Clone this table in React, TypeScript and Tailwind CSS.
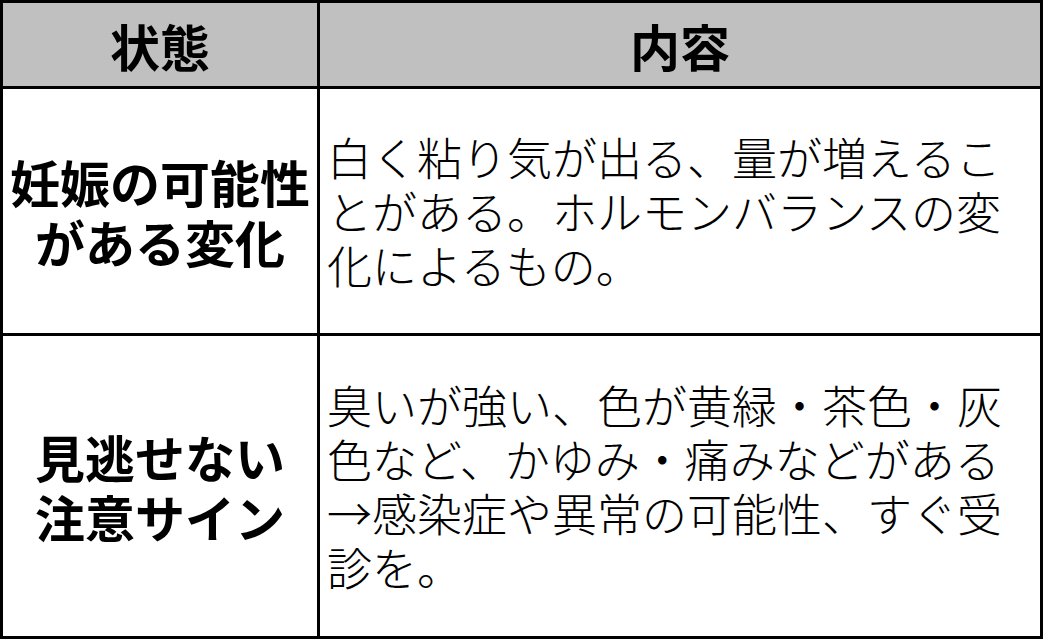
const font = "font-['Noto_Sans_CJK_JP','Noto_Sans',sans-serif]";

const rows = [
  {
    label: ["妊娠の可能性", "がある変化"],
    lines: ["白く粘り気が出る、量が増えるこ", "とがある。ホルモンバランスの変", "化によるもの。"],
    height: "h-[247px] border-b-[3px]",
  },
  {
    label: ["見逃せない", "注意サイン"],
    lines: [
      "臭いが強い、色が黄緑・茶色・灰",
      "色など、かゆみ・痛みなどがある",
      "→感染症や異常の可能性、すぐ受",
      "診を。",
    ],
    height: "h-[300px]",
  },
];

export default function App() {
  return (
    <div className={`min-h-screen bg-white text-black ${font}`}>
      <div className="w-[1043px] border-[3px] border-black">
        {/* header */}
        <div className="flex h-[86px] border-b-[3px] border-black bg-[#c0c0c0]">
          <div className="flex w-[317px] items-center justify-center border-r-[3px] border-black text-[50px] font-bold leading-none">
            状態
          </div>
          <div className="flex flex-1 items-center justify-center text-[50px] font-bold leading-none">
            内容
          </div>
        </div>

        {rows.map((row) => (
          <div key={row.label[0]} className={`flex border-black ${row.height}`}>
            <div className="flex w-[317px] flex-col items-center justify-center border-r-[3px] border-black text-[50px] font-bold leading-[60px]">
              {row.label.map((l) => (
                <span key={l} className="whitespace-nowrap">
                  {l}
                </span>
              ))}
            </div>
            <div className="flex flex-1 flex-col justify-center pl-[7px] text-[45px] font-light leading-[54px]">
              {row.lines.map((l) => (
                <span key={l} className="whitespace-nowrap">
                  {l}
                </span>
              ))}
            </div>
          </div>
        ))}
      </div>
    </div>
  );
}
